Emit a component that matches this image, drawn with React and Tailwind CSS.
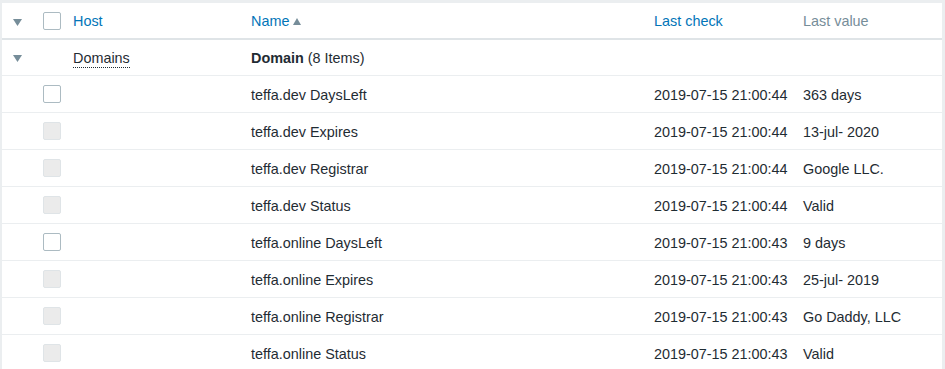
import React from "react";

const rows = [
  ["teffa.dev DaysLeft", "2019-07-15 21:00:44", "363 days", true],
  ["teffa.dev Expires", "2019-07-15 21:00:44", "13-jul- 2020", false],
  ["teffa.dev Registrar", "2019-07-15 21:00:44", "Google LLC.", false],
  ["teffa.dev Status", "2019-07-15 21:00:44", "Valid", false],
  ["teffa.online DaysLeft", "2019-07-15 21:00:43", "9 days", true],
  ["teffa.online Expires", "2019-07-15 21:00:43", "25-jul- 2019", false],
  ["teffa.online Registrar", "2019-07-15 21:00:43", "Go Daddy, LLC", false],
  ["teffa.online Status", "2019-07-15 21:00:43", "Valid", false],
];

const grid = "grid grid-cols-[33px_30px_178px_403px_149px_1fr] items-center";

function Arrow() {
  return (
    <svg width="9" height="7" viewBox="0 0 9 7" className="block">
      <path d="M0 0 L9 0 L4.5 7 Z" fill="#768d99" />
    </svg>
  );
}

function Box({ enabled }) {
  return (
    <div
      className={
        enabled
          ? "w-[18px] h-[18px] rounded-[2px] border border-[#acbbc2] bg-white"
          : "w-[18px] h-[18px] rounded-[2px] border border-[#dfe4e7] bg-[#ebebeb]"
      }
    />
  );
}

export default function App() {
  return (
    <div
      className="w-[945px] h-[369px] overflow-hidden bg-[#ebeef0] pt-[3px] pl-[2px] pr-[3px] text-[14.4px] text-[#1f2c33]"
      style={{ fontFamily: '"Liberation Sans", Arial, sans-serif' }}
    >
      <div className="bg-white h-full">
        <div className={`${grid} h-[37px] border-b-2 border-[#dfe4e7]`}>
          <div className="pl-[11px] pt-[3px]"><Arrow /></div>
          <div className="pl-[8px]"><Box enabled /></div>
          <div className="pl-[8px] pt-[2px] text-[#0275b8]">Host</div>
          <div className="pl-[8px] pt-[2px] text-[#0275b8] flex items-center gap-[4px]">
            Name
            <svg width="8" height="7" viewBox="0 0 8 7"><path d="M0 7 L8 7 L4 0 Z" fill="#768d99" /></svg>
          </div>
          <div className="pl-[8px] pt-[2px] text-[#0275b8]">Last check</div>
          <div className="pl-[8px] pt-[2px] text-[#768d99]">Last value</div>
        </div>
        <div className={`${grid} h-[36px] border-b border-[#ebeef0]`}>
          <div className="pl-[11px] pt-[2px]"><Arrow /></div>
          <div />
          <div className="pl-[8px] pt-[2px]">
            <span className="border-b border-dotted border-[#1f2c33] leading-[17px] inline-block">Domains</span>
          </div>
          <div className="pl-[8px] pt-[2px]"><span className="font-bold">Domain</span> (8 Items)</div>
          <div />
          <div />
        </div>
        {rows.map(([name, check, val, en]) => (
          <div key={name} className={`${grid} h-[37px] border-b border-[#ebeef0]`}>
            <div />
            <div className="pl-[8px]"><Box enabled={en} /></div>
            <div />
            <div className="pl-[8px] pt-[4px] whitespace-nowrap">{name}</div>
            <div className="pl-[8px] pt-[4px] whitespace-nowrap">{check}</div>
            <div className="pl-[8px] pt-[4px] whitespace-nowrap">{val}</div>
          </div>
        ))}
      </div>
    </div>
  );
}
